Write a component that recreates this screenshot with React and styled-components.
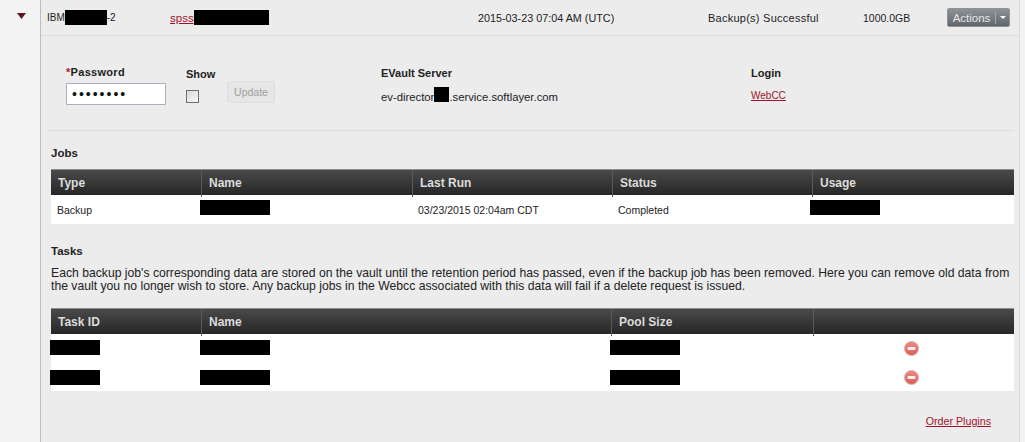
import React from 'react'
import styled, { createGlobalStyle } from 'styled-components'

const Global = createGlobalStyle`
  html, body { margin: 0; padding: 0; background: #f3f3f3; }
  body { font-family: "Liberation Sans", Arial, sans-serif; font-size: 10px; color: #222; }
`

const Page = styled.div`
  display: flex;
  width: 1025px;
  height: 442px;
  overflow: hidden;
`

const Gutter = styled.div`
  width: 40px;
  flex: none;
  padding: 13px 0 0 17px;
  box-sizing: border-box;
`

const Main = styled.div`
  width: 980px;
  flex: none;
  background: #ececec;
  border-left: 1px solid #bdbdbd;
  border-right: 1px solid #dcdcdc;
  box-sizing: border-box;
`

const TopRow = styled.div`
  display: grid;
  grid-template-columns: 123px 308px 230px 155px 84px 63px;
  align-items: center;
  height: 36px;
  padding-left: 6px;
  box-sizing: border-box;
  border-bottom: 1px solid #dcdcdc;
`

const Cell = styled.div`
  display: flex;
  align-items: center;
  white-space: nowrap;
  font-size: ${p => p.$size || 10.5}px;
  margin-left: ${p => p.$left || 0}px;
  letter-spacing: ${p => p.$track || 0}px;
`

const Redact = styled.span`
  display: inline-block;
  flex: none;
  width: ${p => p.$w}px;
  height: 15px;
  background: #000;
  margin-bottom: ${p => (p.$up || 0) * 2}px;
`

const Link = styled.a`
  color: #a3122a;
  text-decoration: underline;
  font-size: ${p => p.$size || 10}px;
`

const ActionsButton = styled.div`
  display: flex;
  align-items: center;
  width: 63px;
  height: 19px;
  box-sizing: border-box;
  border-radius: 2px;
  background: linear-gradient(#8d9296, #62676b);
  border: 1px solid #8f9396;
  color: #e4e6e8;
  font-size: 11.5px;
`

const ActionsLabel = styled.span`
  width: 47px;
  text-align: center;
  border-right: 1px solid #a2a6a9;
`

const Caret = styled.span`
  margin-left: 4px;
  width: 0;
  height: 0;
  border-left: 3px solid transparent;
  border-right: 3px solid transparent;
  border-top: 3px solid #fff;
`

const FormRow = styled.div`
  display: grid;
  grid-template-columns: 120px 41px 154px 370px 100px;
  height: 94px;
  padding: 29px 0 0 25px;
  box-sizing: border-box;
`

const Rule = styled.div`
  height: 1px;
  margin: 0 5px;
  background: #dedede;
`

const FieldLabel = styled.div`
  font-size: 11px;
  font-weight: bold;
  color: #222;
  height: ${p => p.$h}px;
  line-height: 14px;
  padding-top: ${p => p.$top || 0}px;
  letter-spacing: ${p => p.$track || 0}px;
  box-sizing: border-box;
`

const Star = styled.span`
  color: #b01030;
`

const PasswordBox = styled.div`
  width: 100px;
  height: 22px;
  box-sizing: border-box;
  background: #fff;
  border: 1px solid #a9b0bb;
  font-size: 14px;
  letter-spacing: 2px;
  line-height: 20px;
  padding-left: 5px;
  color: #111;
`

const CheckBox = styled.div`
  width: 13px;
  height: 13px;
  box-sizing: border-box;
  border: 1px solid #707070;
  background: linear-gradient(135deg, #d8d8d8, #f8f8f8);
`

const UpdateButton = styled.div`
  width: 48px;
  height: 22px;
  margin-top: 16px;
  box-sizing: border-box;
  border: 1px solid #dedede;
  border-radius: 3px;
  background: #e6e6e6;
  color: #a0a0a0;
  font-size: 10.5px;
  text-align: center;
  line-height: 20px;
`

const ServerText = styled.div`
  display: flex;
  align-items: center;
  font-size: 11.3px;
  line-height: 15px;
`

const LoginLink = styled.div`
  line-height: 15px;
  padding-top: 1px;
`

const Section = styled.div`
  padding: ${p => p.$top}px 10px 0 10px;
`

const SectionTitle = styled.div`
  font-size: 11.5px;
  font-weight: bold;
  color: #222;
  line-height: 14px;
`

const Blurb = styled.div`
  font-size: 12.2px;
  line-height: 13px;
  color: #222;
  margin-top: 9px;
  width: 965px;
  white-space: nowrap;
`

const Table = styled.div`
  width: 963px;
  margin-top: ${p => p.$top}px;
`

const Head = styled.div`
  display: grid;
  grid-template-columns: ${p => p.$cols};
  height: 26px;
  background: linear-gradient(#4a4a4a, #262626);
  border-top: 1px solid #8c8c8c;
  box-sizing: border-box;
`

const HeadCell = styled.div`
  color: #dcdcdc;
  font-size: 12px;
  font-weight: bold;
  line-height: 27px;
  padding-left: 7px;
  border-left: ${p => (p.$first ? 'none' : '1px solid #5a5a5a')};
`

const Row = styled.div`
  display: grid;
  grid-template-columns: ${p => p.$cols};
  height: ${p => p.$h}px;
  background: #fff;
  align-items: center;
`

const RemoveIcon = styled.svg`
  display: block;
  width: 15px;
  height: 15px;
  margin-left: 92px;
`

const Footer = styled.div`
  display: flex;
  justify-content: flex-end;
  padding: 24px 28px 0 0;
`

const Remove = ({ id }) => (
  <RemoveIcon viewBox="0 0 15 15">
    <defs>
      <linearGradient id={id} x1="0" y1="0" x2="0" y2="1">
        <stop offset="0" stopColor="#ee8a84" />
        <stop offset="1" stopColor="#dd5c58" />
      </linearGradient>
    </defs>
    <circle cx="7.5" cy="7.5" r="7" fill={`url(#${id})`} stroke="#e0b0ae" />
    <rect x="3.5" y="6" width="8" height="3" rx="1" fill="#fbeeee" />
  </RemoveIcon>
)

const jobCols = '150px 211px 200px 200px 202px'
const taskCols = '150px 410px 202px 201px'
const jobRowCols = '149px 218px 200px 192px 204px'
const taskRowCols = '149px 410px 202px 202px'

const App = () => (
  <>
    <Global />
    <Page>
      <Gutter>
        <svg width="9" height="6" viewBox="0 0 9 6" style={{ display: 'block' }}>
          <path d="M0 0h9L4.5 6z" fill="#5a1420" />
        </svg>
      </Gutter>
      <Main>
        <TopRow>
          <Cell $size={10}>IBM<Redact $w={42} />-2</Cell>
          <Cell><Link $size={11.5}>spss</Link><Redact $w={75} /></Cell>
          <Cell $size={10.8}>2015-03-23 07:04 AM (UTC)</Cell>
          <Cell $size={11} $track={0.25}>Backup(s) Successful</Cell>
          <Cell>1000.0GB</Cell>
          <ActionsButton><ActionsLabel>Actions</ActionsLabel><Caret /></ActionsButton>
        </TopRow>
        <FormRow>
          <div>
            <FieldLabel $h={18} $track={0.3}><Star>*</Star>Password</FieldLabel>
            <PasswordBox>••••••••</PasswordBox>
          </div>
          <div>
            <FieldLabel $h={25} $top={2}>Show</FieldLabel>
            <CheckBox />
          </div>
          <UpdateButton>Update</UpdateButton>
          <div>
            <FieldLabel $h={22} $top={1}>EVault Server</FieldLabel>
            <ServerText>ev-director<Redact $w={15} $up={3} />.service.softlayer.com</ServerText>
          </div>
          <div>
            <FieldLabel $h={22} $top={1}>Login</FieldLabel>
            <LoginLink><Link>WebCC</Link></LoginLink>
          </div>
        </FormRow>
        <Rule />
        <Section $top={15}>
          <SectionTitle>Jobs</SectionTitle>
          <Table $top={9}>
            <Head $cols={jobCols}>
              <HeadCell $first>Type</HeadCell>
              <HeadCell>Name</HeadCell>
              <HeadCell>Last Run</HeadCell>
              <HeadCell>Status</HeadCell>
              <HeadCell>Usage</HeadCell>
            </Head>
            <Row $cols={jobRowCols} $h={29}>
              <Cell $left={6}>Backup</Cell>
              <Cell><Redact $w={70} $up={2} /></Cell>
              <Cell>03/23/2015 02:04am CDT</Cell>
              <Cell>Completed</Cell>
              <Cell><Redact $w={70} $up={2} /></Cell>
            </Row>
          </Table>
        </Section>
        <Section $top={20}>
          <SectionTitle>Tasks</SectionTitle>
          <Blurb>
            Each backup job's corresponding data are stored on the vault until the retention period has passed, even if the backup job has been removed. Here you can remove old data from<br />
            the vault you no longer wish to store. Any backup jobs in the Webcc associated with this data will fail if a delete request is issued.
          </Blurb>
          <Table $top={15}>
            <Head $cols={taskCols}>
              <HeadCell $first>Task ID</HeadCell>
              <HeadCell>Name</HeadCell>
              <HeadCell>Pool Size</HeadCell>
              <HeadCell />
            </Head>
            <Row $cols={taskRowCols} $h={29}>
              <Cell $left={-1}><Redact $w={50} $up={1} /></Cell>
              <Cell><Redact $w={70} $up={1} /></Cell>
              <Cell><Redact $w={70} $up={1} /></Cell>
              <Remove id="removeA" />
            </Row>
            <Row $cols={taskRowCols} $h={28}>
              <Cell $left={-1}><Redact $w={50} /></Cell>
              <Cell><Redact $w={70} /></Cell>
              <Cell><Redact $w={70} /></Cell>
              <Remove id="removeB" />
            </Row>
          </Table>
        </Section>
        <Footer><Link $size={10.7}>Order Plugins</Link></Footer>
      </Main>
    </Page>
  </>
)

export default App
